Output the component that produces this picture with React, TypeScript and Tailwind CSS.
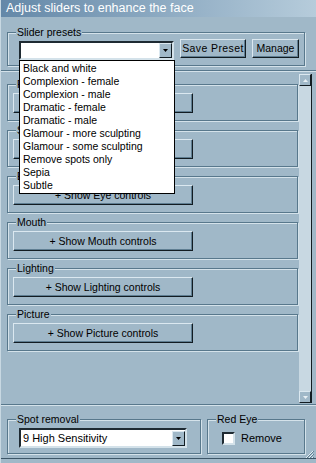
import { ReactNode } from 'react';

const presets = [
    'Black and white',
    'Complexion - female',
    'Complexion - male',
    'Dramatic - female',
    'Dramatic - male',
    'Glamour - more sculpting',
    'Glamour - some sculpting',
    'Remove spots only',
    'Sepia',
    'Subtle',
];

// Face and Skin sit under the open preset list, so their buttons show no caption
const sections = [
    { label: 'Face', caption: '' },
    { label: 'Skin', caption: '' },
    { label: 'Eyes', caption: '+ Show Eye controls' },
    { label: 'Mouth', caption: '+ Show Mouth controls' },
    { label: 'Lighting', caption: '+ Show Lighting controls' },
    { label: 'Picture', caption: '+ Show Picture controls' },
];

function Group({ label, className, children }: { label: string; className?: string; children: ReactNode }) {
    return (
        <fieldset
            className={
                'border border-[#58788c] shadow-[inset_1px_1px_0_#d4e2ea,1px_1px_0_#d4e2ea] ' + (className ?? '')
            }
        >
            <legend className="ml-[8px] px-[1px] leading-[13px] bg-[#a0b8c8]">{label}</legend>
            {children}
        </fieldset>
    );
}

function RaisedButton({ children, className }: { children: ReactNode; className?: string }) {
    return (
        <button
            className={
                'flex items-center justify-center bg-[#a0b8c8] border border-t-[#dbe8f0] border-l-[#dbe8f0] border-r-[#121c22] border-b-[#121c22] shadow-[inset_-1px_-1px_0_#5f7e92] leading-none ' +
                (className ?? '')
            }
        >
            {children}
        </button>
    );
}

function DownArrow() {
    return (
        <div className="w-[13px] h-[15px] bg-[#a0b8c8] border border-t-[#dbe8f0] border-l-[#dbe8f0] border-r-[#121c22] border-b-[#121c22] flex items-center justify-center">
            <svg width="5" height="3" viewBox="0 0 5 3">
                <path d="M0 0h5L2.5 3z" fill="#000" />
            </svg>
        </div>
    );
}

function Combo({ value, className, children }: { value?: string; className?: string; children?: ReactNode }) {
    return (
        <div
            className={
                'relative flex items-center bg-white border-2 border-t-[#1e2a32] border-l-[#1e2a32] border-r-[#d4e2ea] border-b-[#d4e2ea] ' +
                (className ?? '')
            }
        >
            <div className="flex-1 pl-[2px] leading-[13px] overflow-hidden whitespace-nowrap">{value}</div>
            <DownArrow />
            {children}
        </div>
    );
}

export default function App() {
    return (
        <div className="w-[316px] h-[463px] bg-[#a0b8c8] flex flex-col relative overflow-hidden text-[10.5px] text-black font-['Liberation_Sans',Arial,sans-serif] border-l border-[#c8d8e2]">
            <div className="h-[17px] bg-gradient-to-r from-[#6488a8] to-[#b6ccdb] text-white text-[12.5px] leading-[17px] pl-[5px]">
                Adjust sliders to enhance the face
            </div>

            <Group label="Slider presets" className="mt-[9px] ml-[6px] mr-[11px] relative z-10">
                <div className="flex items-start pl-[11px] pb-[5px]">
                    <Combo className="w-[155px] h-[19px] mt-[2px]">
                        <div className="absolute left-[-2px] top-[17px] w-[156px] bg-white border border-black py-[1px]">
                            {presets.map((p) => (
                                <div key={p} className="h-[13px] leading-[13px] pl-[3px] whitespace-nowrap">
                                    {p}
                                </div>
                            ))}
                        </div>
                    </Combo>
                    <RaisedButton className="ml-[6px] w-[66px] h-[19px] tracking-[0.4px]">Save Preset</RaisedButton>
                    <RaisedButton className="ml-[6px] w-[47px] h-[19px]">Manage</RaisedButton>
                </div>
            </Group>

            <div className="mt-[4px] h-[334px] border-t border-[#58788c] flex flex-col">
                <div className="flex-1 border-t border-[#d4e2ea] flex pl-[2px] pr-[4px]">
                    <div className="flex-1 flex flex-col gap-[3px] pt-[6px] pl-[4px] pr-[1px]">
                        {sections.map((s) => (
                            <Group key={s.label} label={s.label}>
                                <div className="flex pl-[5px] pt-[2px] pb-[7px]">
                                    <RaisedButton className="w-[180px] h-[20px]">{s.caption}</RaisedButton>
                                </div>
                            </Group>
                        ))}
                    </div>
                    <div className="w-[13px] mt-[2px] mb-[1px] bg-[#c8d8e2] border-r border-[#121c22] flex flex-col justify-between">
                        <div className="w-[12px] h-[12px] bg-[#a0b8c8] border border-t-[#dbe8f0] border-l-[#dbe8f0] border-r-[#121c22] border-b-[#121c22] flex items-center justify-center">
                            <svg width="5" height="3" viewBox="0 0 5 3">
                                <path d="M0 3h5L2.5 0z" fill="#e8f0f4" />
                            </svg>
                        </div>
                        <div className="w-[12px] h-[12px] bg-[#a0b8c8] border border-t-[#dbe8f0] border-l-[#dbe8f0] border-r-[#121c22] border-b-[#121c22] flex items-center justify-center">
                            <svg width="5" height="3" viewBox="0 0 5 3">
                                <path d="M0 0h5L2.5 3z" fill="#e8f0f4" />
                            </svg>
                        </div>
                    </div>
                </div>
            </div>

            <div className="border-t border-[#58788c]">
                <div className="border-t border-[#d4e2ea] flex pt-[7px] pl-[6px] pr-[11px]">
                    <Group label="Spot removal" className="w-[194px]">
                        <div className="pl-[11px] pt-[2px] pb-[5px]">
                            <Combo value="9 High Sensitivity" className="w-[168px] h-[20px] text-[11px]" />
                        </div>
                    </Group>
                    <Group label="Red Eye" className="ml-[6px] flex-1">
                        <label className="flex items-center pl-[14px] pt-[6px] pb-[8px]">
                            <span className="w-[13px] h-[13px] bg-white border-2 border-t-[#1e2a32] border-l-[#1e2a32] border-r-[#d4e2ea] border-b-[#d4e2ea]" />
                            <span className="ml-[6px] leading-[13px] text-[11px]">Remove</span>
                        </label>
                    </Group>
                </div>
            </div>

            <div className="flex-1 relative">
                <svg className="absolute right-[2px] bottom-[3px]" width="10" height="10" viewBox="0 0 10 10">
                    <path d="M9 1L1 9M9 4L4 9M9 7L7 9" stroke="#e6eef3" strokeWidth="1" />
                    <path d="M10 1L2 9M10 4L5 9M10 7L8 9" stroke="#5f7e92" strokeWidth="1" />
                </svg>
                <div className="absolute left-0 right-0 bottom-[4px] border-t border-[#3d5668]" />
            </div>
        </div>
    );
}
